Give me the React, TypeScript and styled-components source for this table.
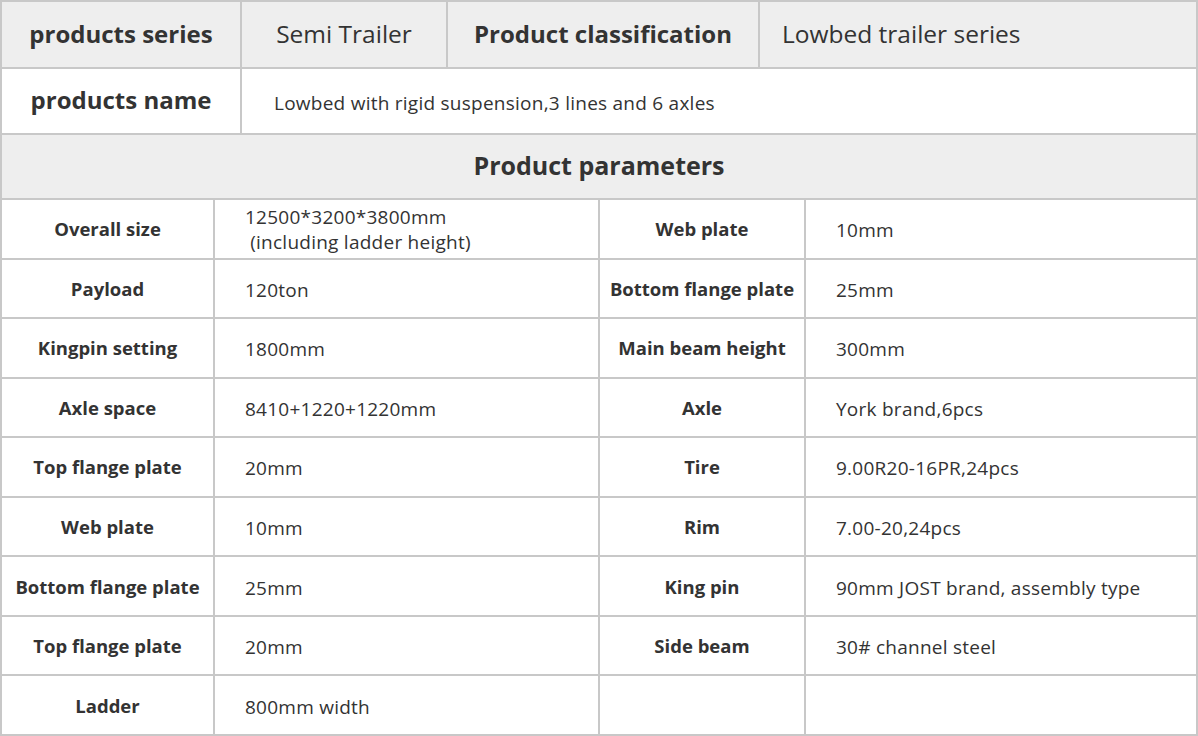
import styled, { createGlobalStyle } from 'styled-components'

const GlobalStyle = createGlobalStyle`
  html, body {
    margin: 0;
    padding: 0;
    background: #fff;
  }
  body {
    font-family: "Open Sans", "Noto Sans", Arial, sans-serif;
    color: #333;
  }
`

const Sheet = styled.div`
  width: 1198px;
  height: 736px;
  box-sizing: border-box;
  padding: 2px;
  background: #c8c8c8;
  display: grid;
  grid-template-rows: 65px 64px 63px 1fr;
  gap: 2px;
`

const Row = styled.div<{ $cols: string }>`
  display: grid;
  grid-template-columns: ${p => p.$cols};
  gap: 2px;
`

const ParamGrid = styled.div`
  display: grid;
  grid-template-rows: repeat(9, 1fr);
  gap: 2px;
`

const Cell = styled.div<{ $grey?: boolean; $bold?: boolean; $left?: number; $big?: boolean }>`
  display: flex;
  align-items: center;
  justify-content: ${p => (p.$left !== undefined ? 'flex-start' : 'center')};
  padding-left: ${p => p.$left ?? 0}px;
  padding-bottom: ${p => (p.$big ? 3 : 0)}px;
  padding-top: ${p => (!p.$big && p.$left !== undefined ? 3 : 0)}px;
  background: ${p => (p.$grey ? '#eeeeee' : '#ffffff')};
  font-weight: ${p => (p.$bold ? 700 : 400)};
  font-size: ${p => (p.$big ? (p.$bold ? 24 : 24.5) : p.$bold ? 18.5 : 19)}px;
  letter-spacing: ${p => (!p.$big && !p.$bold ? 0.25 : 0)}px;
  color: #333;
  white-space: nowrap;
`

const SectionTitle = styled.div`
  display: flex;
  align-items: center;
  justify-content: center;
  padding-bottom: 3px;
  background: #eeeeee;
  font-size: 25px;
  font-weight: 700;
  color: #333;
`

const Value = styled.div`
  line-height: 25px;
`

type Param = [string, string | string[], string, string]

const params: Param[] = [
  ['Overall size', ['12500*3200*3800mm', '\u00a0(including ladder height)'], 'Web plate', '10mm'],
  ['Payload', '120ton', 'Bottom flange plate', '25mm'],
  ['Kingpin setting', '1800mm', 'Main beam height', '300mm'],
  ['Axle space', '8410+1220+1220mm', 'Axle', 'York brand,6pcs'],
  ['Top flange plate', '20mm', 'Tire', '9.00R20-16PR,24pcs'],
  ['Web plate', '10mm', 'Rim', '7.00-20,24pcs'],
  ['Bottom flange plate', '25mm', 'King pin', '90mm JOST brand, assembly type'],
  ['Top flange plate', '20mm', 'Side beam', '30# channel steel'],
  ['Ladder', '800mm width', '', ''],
]

const topCols = '238px 204px 310px 1fr'
const nameCols = '238px 1fr'
const paramCols = '211px 383px 204px 1fr'

export default function App() {
  return (
    <>
      <GlobalStyle />
      <Sheet>
        <Row $cols={topCols}>
          <Cell $grey $bold $big>products series</Cell>
          <Cell $grey $big>Semi Trailer</Cell>
          <Cell $grey $bold $big>Product classification</Cell>
          <Cell $grey $left={22} $big>Lowbed trailer series</Cell>
        </Row>
        <Row $cols={nameCols}>
          <Cell $bold $big>products name</Cell>
          <Cell $left={32}>Lowbed with rigid suspension,3 lines and 6 axles</Cell>
        </Row>
        <SectionTitle>Product parameters</SectionTitle>
        <ParamGrid>
          {params.map((p, i) => (
            <Row key={i} $cols={paramCols}>
              <Cell $bold>{p[0]}</Cell>
              <Cell $left={30}>
                {Array.isArray(p[1]) ? (
                  <Value>
                    {p[1].map(line => (
                      <div key={line}>{line}</div>
                    ))}
                  </Value>
                ) : (
                  p[1]
                )}
              </Cell>
              <Cell $bold>{p[2]}</Cell>
              <Cell $left={30}>{p[3]}</Cell>
            </Row>
          ))}
        </ParamGrid>
      </Sheet>
    </>
  )
}
